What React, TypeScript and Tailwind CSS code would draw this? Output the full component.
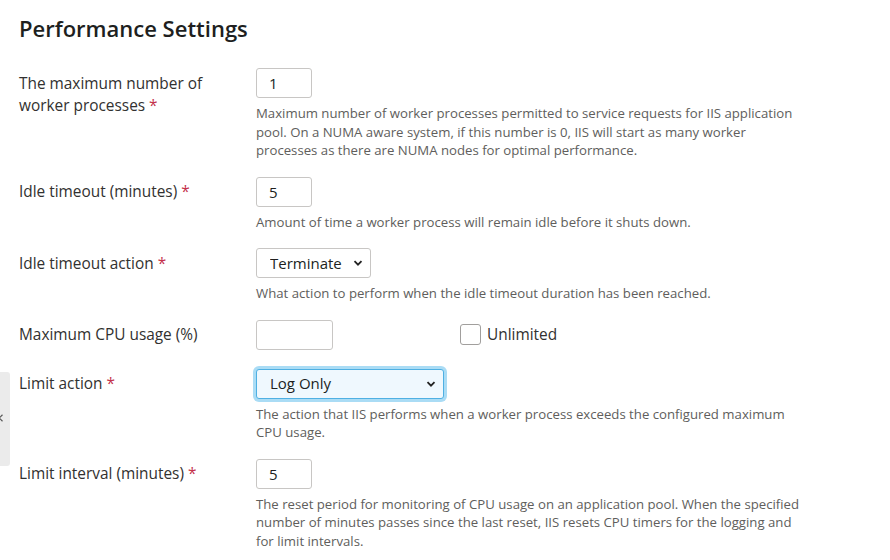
import { useState } from 'react';

const font = { fontFamily: '"Open Sans", "Noto Sans", sans-serif' };

function Chevron() {
    return (
        <svg width="10" height="10" viewBox="0 0 10 10" className="absolute right-[8px] top-1/2 -translate-y-1/2 pointer-events-none">
            <path d="M1.5 3.2 L5 6.7 L8.5 3.2" fill="none" stroke="#222" strokeWidth="1.8" />
        </svg>
    );
}

type RowProps = {
    label: string;
    required?: boolean;
    help?: string;
    children: React.ReactNode;
};

function Row({ label, required, help, children }: RowProps) {
    return (
        <div className={`flex items-start ${help ? 'mb-[17px]' : 'mb-[19px]'}`}>
            <label className="w-[237px] shrink-0 pt-[4.5px] pr-4 text-[15.4px] leading-[22px] text-[#323130]">
                {label}
                {required && <span className="text-[#c4314b]">{'\u00a0*'}</span>}
            </label>
            <div className="flex-1">
                {children}
                {help && (
                    <p className="mt-[6px] max-w-[548px] text-[13.2px] leading-[18.5px] text-[#605e5c]">{help}</p>
                )}
            </div>
        </div>
    );
}

export default function App() {
    const [workers, setWorkers] = useState('1');
    const [idle, setIdle] = useState('5');
    const [cpu, setCpu] = useState('');
    const [interval, setInterval] = useState('5');
    const [unlimited, setUnlimited] = useState(false);

    const inputCls =
        'h-[30px] px-3 border border-[#c8c6c4] rounded-[3px] bg-white text-[15px] text-[#201f1e] focus:outline-none';

    return (
        <div className="relative min-h-screen bg-white px-[19px] pt-[11px] overflow-hidden" style={font}>
            {/* collapsed side panel tab */}
            <div className="absolute left-0 top-[372px] w-[10px] h-[94px] bg-[#ebebeb] rounded-r-[3px]">
                <svg width="6" height="8" viewBox="0 0 6 8" className="absolute left-[-2px] top-[42px]">
                    <path d="M4.5 0.8 L1.2 4 L4.5 7.2" fill="none" stroke="#555" strokeWidth="1.2" />
                </svg>
            </div>

            <h1 className="text-[22px] font-semibold leading-[34px] text-[#201f1e] mb-[23px]">Performance Settings</h1>

            <Row
                label="The maximum number of worker processes"
                required
                help="Maximum number of worker processes permitted to service requests for IIS application pool. On a NUMA aware system, if this number is 0, IIS will start as many worker processes as there are NUMA nodes for optimal performance."
            >
                <input value={workers} onChange={(e) => setWorkers(e.target.value)} className={`${inputCls} w-[56px] block`} />
            </Row>

            <Row
                label="Idle timeout (minutes)"
                required
                help="Amount of time a worker process will remain idle before it shuts down."
            >
                <input value={idle} onChange={(e) => setIdle(e.target.value)} className={`${inputCls} w-[56px] block`} />
            </Row>

            <Row
                label="Idle timeout action"
                required
                help="What action to perform when the idle timeout duration has been reached."
            >
                <div className="relative w-[115px]">
                    <select
                        defaultValue="Terminate"
                        className={`${inputCls} w-full appearance-none pl-[13px] pr-6`}
                    >
                        <option>Terminate</option>
                        <option>Suspend</option>
                    </select>
                    <Chevron />
                </div>
            </Row>

            <Row label="Maximum CPU usage (%)">
                <div className="flex items-center">
                    <input value={cpu} onChange={(e) => setCpu(e.target.value)} className={`${inputCls} w-[77px] block`} />
                    <label className="ml-[127px] flex items-center text-[15.4px] text-[#323130]">
                        <input
                            type="checkbox"
                            checked={unlimited}
                            onChange={(e) => setUnlimited(e.target.checked)}
                            className="appearance-none w-[21px] h-[21px] border border-[#a19f9d] rounded-[3px] bg-white mr-[6px]"
                        />
                        Unlimited
                    </label>
                </div>
            </Row>

            <Row
                label="Limit action"
                required
                help="The action that IIS performs when a worker process exceeds the configured maximum CPU usage."
            >
                <div className="relative w-[188px]">
                    <select
                        defaultValue="Log Only"
                        className="h-[30px] w-full appearance-none pl-[13px] pr-6 border border-[#4fb0e3] rounded-[3px] bg-[#eff8fe] text-[15px] text-[#201f1e] outline-none ring-[3px] ring-[#aadcf5]"
                    >
                        <option>No Action</option>
                        <option>Kill W3wp</option>
                        <option>Throttle</option>
                        <option>Throttle Under Load</option>
                        <option>Log Only</option>
                    </select>
                    <Chevron />
                </div>
            </Row>

            <Row
                label="Limit interval (minutes)"
                required
                help="The reset period for monitoring of CPU usage on an application pool. When the specified number of minutes passes since the last reset, IIS resets CPU timers for the logging and for limit intervals."
            >
                <input value={interval} onChange={(e) => setInterval(e.target.value)} className={`${inputCls} w-[56px] block`} />
            </Row>
        </div>
    );
}
